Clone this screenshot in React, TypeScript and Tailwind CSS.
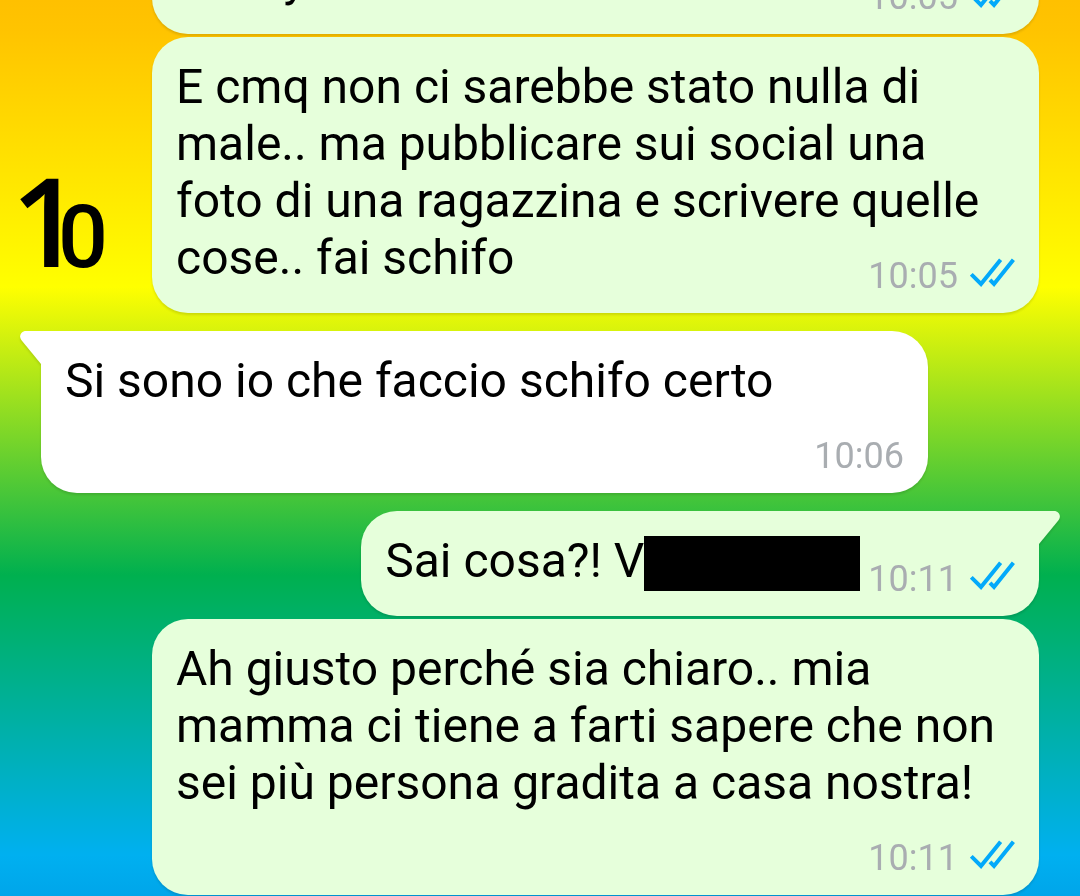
import React from 'react';
import clsx from 'clsx';

type Message = {
    id: number;
    text: string;
    time: string;
    mine?: boolean;
    tail?: boolean;
    redacted?: boolean;
    wide?: boolean;
    gap?: 'small' | 'large';
    marker?: [string, string];
};

const MESSAGES: Message[] = [
    {
        id: 1,
        text: 'E cmq non ci sarebbe stato nulla di male.. ma pubblicare sui social una foto di una ragazzina e scrivere quelle cose.. fai schifo',
        time: '10:05',
        mine: true,
        gap: 'small',
        marker: ['1', '0'],
    },
    { id: 2, text: 'Si sono io che faccio schifo certo', time: '10:06', tail: true, wide: true, gap: 'large' },
    { id: 3, text: 'Sai cosa?! V', time: '10:11', mine: true, tail: true, redacted: true, gap: 'large' },
    {
        id: 4,
        text: 'Ah giusto perché sia chiaro.. mia mamma ci tiene a farti sapere che non sei più persona gradita a casa nostra!',
        time: '10:11',
        mine: true,
        gap: 'small',
    },
];

const ReadTicks: React.FC = () => (
    <svg className="ml-3 h-[30px] w-[45px] shrink-0" viewBox="0 0 45 30" fill="none" stroke="#03a9fa" strokeWidth="4" aria-label="Letto">
        <path d="M1.3 16.3 11 26 30.6 1.8" />
        <path d="M20 21.8 24 26 43.4 1.8" />
    </svg>
);

const Tail: React.FC<{ mine?: boolean }> = ({ mine }) => (
    <svg
        className={clsx('absolute top-0 h-[33px] w-[22px]', mine ? '-right-[21px] -scale-x-100' : '-left-[21px]')}
        viewBox="0 0 22 33"
        fill={mine ? '#e6ffdb' : '#ffffff'}
        aria-hidden="true"
    >
        <path d="M22 0H6C1 0-1.500 5 1.300 9L21 33H22Z" />
    </svg>
);

const Bubble: React.FC<{ message: Message }> = ({ message }) => {
    const { text, time, mine, tail, redacted, wide } = message;
    return (
        <div
            className={clsx(
                'relative flow-root max-w-[887px] rounded-[36px] px-6 pt-[21px] pb-2 text-[48px] leading-[57px] text-black drop-shadow-[0_2px_1px_rgba(0,0,0,0.12)]',
                mine ? 'bg-[#e6ffdb]' : 'bg-white',
                tail && (mine ? 'rounded-tr-none' : 'rounded-tl-none'),
                wide && 'w-full'
            )}
        >
            {tail && <Tail mine={mine} />}
            {text}
            {redacted && <span className="mt-1 -mb-[2px] inline-block h-[55px] w-[216px] bg-black align-top" />}
            {wide && <br />}
            {/* Sits on the last line when there is room, otherwise drops below it */}
            <span className="float-right mt-[19px] ml-2 flex h-[57px] items-baseline text-[36px] text-[#a9adb1]">
                <time>{time}</time>
                {mine && <ReadTicks />}
            </span>
        </div>
    );
};

export default function App() {
    return (
        <main className="min-h-screen overflow-hidden bg-[linear-gradient(to_bottom,#ffc000_0px,#ffc400_32px,#ffff00_287px,#00b04f_575px,#00b0f0_855px,#009fe6_920px)] px-[41px] font-[Roboto,sans-serif]">
            {/* Previous message, scrolled almost out of view */}
            <div className="flex h-[34px] items-end justify-end">
                <div className="w-full max-w-[887px]">
                    <Bubble message={{ id: 0, text: 'hobby', time: '10:05', mine: true, wide: false }} />
                </div>
            </div>

            {MESSAGES.map((message) => (
                <div
                    key={message.id}
                    className={clsx(
                        'relative flex',
                        message.mine ? 'justify-end' : 'justify-start',
                        message.gap === 'small' ? 'mt-[3px]' : 'mt-[18px]'
                    )}
                >
                    {message.marker && (
                        <div className="absolute top-[120px] -left-[30px] flex items-baseline text-black">
                            <span className="font-['Open_Sans',sans-serif] text-[124px] leading-[124px] font-semibold">{message.marker[0]}</span>
                            <span className="-ml-6 text-[88px] leading-[88px] font-medium">{message.marker[1]}</span>
                        </div>
                    )}
                    <Bubble message={message} />
                </div>
            ))}
        </main>
    );
}
